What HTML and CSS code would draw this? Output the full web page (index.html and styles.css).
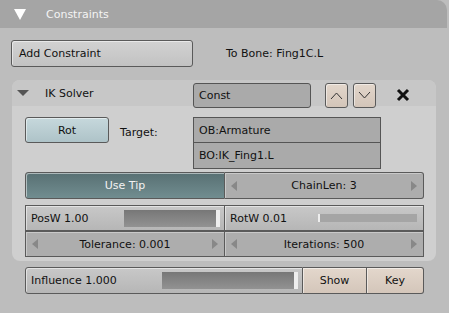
FILE: index.html
```html
<!DOCTYPE html>
<html lang="en">
<head>
  <meta charset="UTF-8" />
  <title>Constraints</title>
  <link rel="stylesheet" href="styles.css">
</head>
<body>
  <div class="header">
    <span class="tri-white"></span>
    <span class="header-title">Constraints</span>
  </div>

  <div class="content">
    <div class="top-row">
      <div class="btn add-btn">Add Constraint</div>
      <div class="bone-label">To Bone: Fing1C.L</div>
    </div>

    <!-- IK solver panel -->
    <div class="panel">
      <div class="panel-head">
        <span class="tri-dark"></span>
        <span class="panel-title">IK Solver</span>
        <div class="field const-field">Const</div>
        <div class="btn small-btn">
          <svg width="13" height="9" viewBox="0 0 13 9"><path d="M1 8 L6.5 2 L12 8" fill="none" stroke="#333" stroke-width="1"/></svg>
        </div>
        <div class="btn small-btn">
          <svg width="13" height="9" viewBox="0 0 13 9"><path d="M1 1 L6.5 7 L12 1" fill="none" stroke="#333" stroke-width="1"/></svg>
        </div>
        <svg class="close-x" width="14" height="14" viewBox="0 0 14 14"><path d="M2 2 L12 12 M12 2 L2 12" stroke="#111" stroke-width="3"/></svg>
      </div>

      <div class="panel-body">
        <div class="target-row">
          <div class="btn rot-btn">Rot</div>
          <div class="target-label">Target:</div>
          <div class="target-fields">
            <div class="field tfield">OB:Armature</div>
            <div class="field tfield">BO:IK_Fing1.L</div>
          </div>
        </div>

        <div class="grid-row first">
          <div class="btn tip-btn">Use Tip</div>
          <div class="num"><span class="arr-l"></span>ChainLen: 3<span class="arr-r"></span></div>
        </div>
        <div class="grid-row">
          <div class="slider"><span>PosW 1.00</span><div class="track"><div class="fill" style="width:100%"></div></div></div>
          <div class="slider"><span>RotW 0.01</span><div class="track"><div class="fill" style="width:0%"></div></div></div>
        </div>
        <div class="grid-row">
          <div class="num"><span class="arr-l"></span>Tolerance: 0.001<span class="arr-r"></span></div>
          <div class="num"><span class="arr-l"></span>Iterations: 500<span class="arr-r"></span></div>
        </div>
      </div>
    </div>

    <div class="bottom-row">
      <div class="slider influence"><span>Influence 1.000</span><div class="track"><div class="fill" style="width:100%"></div></div></div>
      <div class="btn beige show-btn">Show</div>
      <div class="btn beige key-btn">Key</div>
    </div>
  </div>
</body>
</html>
```

FILE: styles.css
```css
body {
  margin: 0;
  width: 449px;
  height: 313px;
  overflow: hidden;
  background: #bdbdbd;
  font-family: 'DejaVu Sans', sans-serif;
  font-size: 11px;
  color: #111;
  white-space: nowrap;
}

.header {
  height: 28px;
  background: #a5a5a5;
  border-top-right-radius: 10px;
  display: flex;
  align-items: center;
  margin-right: 2px;
}

.tri-white {
  width: 0;
  height: 0;
  margin-left: 14px;
  border-left: 6px solid transparent;
  border-right: 6px solid transparent;
  border-top: 11px solid #fff;
}

.header-title {
  margin-left: 20px;
  color: #f4f4f4;
}

.content {
  padding: 12px 0 0 11px;
}

.btn {
  box-sizing: border-box;
  display: flex;
  align-items: center;
  justify-content: center;
  border: 1px solid #5a5a5a;
  border-radius: 3px;
  box-shadow: inset 1px 1px 0 rgba(255,255,255,0.5);
}

.top-row {
  display: flex;
  align-items: center;
  height: 27px;
}

.add-btn {
  width: 182px;
  height: 27px;
  justify-content: flex-start;
  padding-left: 7px;
  background: linear-gradient(#d2d2d2, #c2c2c2);
}

.bone-label {
  margin-left: 33px;
}

.panel {
  margin: 13px 0 0 1px;
  width: 424px;
  height: 181px;
  background: #cfcfcf;
  border-radius: 8px;
  overflow: hidden;
}

.panel-head {
  height: 26px;
  background: #c7c7c7;
  display: flex;
  align-items: center;
}

.tri-dark {
  width: 0;
  height: 0;
  margin-left: 5px;
  border-left: 6px solid transparent;
  border-right: 6px solid transparent;
  border-top: 6px solid #555;
}

.panel-title {
  margin-left: 16px;
  width: 148px;
}

.field {
  box-sizing: border-box;
  display: flex;
  align-items: center;
  padding-left: 5px;
  border: 1px solid #555;
  background: #aaaaaa;
}

.const-field {
  width: 118px;
  height: 25px;
  margin-top: 4px;
  border-radius: 3px;
}

.small-btn {
  width: 23px;
  height: 25px;
  margin-top: 4px;
  margin-left: 14px;
  background: linear-gradient(#e2d6cb, #d3c5b9);
}

.small-btn + .small-btn {
  margin-left: 5px;
}

.close-x {
  margin: 4px 0 0 20px;
}

.panel-body {
  padding: 11px 0 0 13px;
}

.target-row {
  display: flex;
  height: 52px;
}

.rot-btn {
  width: 84px;
  height: 26px;
  background: linear-gradient(#c6d8dc, #aec3c8);
}

.target-label {
  width: 73px;
  margin-left: 11px;
  margin-top: 9px;
}

.target-fields {
  width: 188px;
  display: flex;
  flex-direction: column;
}

.tfield {
  height: 26px;
}

.tfield + .tfield {
  border-top: none;
}

.grid-row {
  display: flex;
  width: 399px;
  height: 26px;
}

.grid-row.first {
  margin-top: 3px;
  margin-bottom: 6px;
  height: 27px;
}

.grid-row > div {
  flex: 1 1 0;
  min-width: 0;
}

.tip-btn {
  color: #f2f2f2;
  background: linear-gradient(#587073, #718d90);
  border-radius: 3px 0 0 3px;
}

.num {
  box-sizing: border-box;
  position: relative;
  display: flex;
  align-items: center;
  justify-content: center;
  background: #adadad;
  border: 1px solid #5a5a5a;
  box-shadow: inset 1px 1px 0 rgba(255,255,255,0.35);
}

.grid-row.first .num {
  border-radius: 0 3px 3px 0;
  border-left: none;
}

.grid-row .num + .num {
  border-left: none;
}

.arr-l, .arr-r {
  position: absolute;
  top: 50%;
  margin-top: -5px;
  width: 0;
  height: 0;
  border-top: 5px solid transparent;
  border-bottom: 5px solid transparent;
}

.arr-l {
  left: 6px;
  border-right: 6px solid #888;
}

.arr-r {
  right: 6px;
  border-left: 6px solid #888;
}

.slider {
  box-sizing: border-box;
  display: flex;
  align-items: center;
  padding-left: 5px;
  background: linear-gradient(#c8c8c8, #b6b6b6);
  border: 1px solid #5a5a5a;
  box-shadow: inset 1px 1px 0 rgba(255,255,255,0.5);
}

.slider span {
  flex: 1;
}

.track {
  flex-shrink: 0;
  width: 94px;
  height: 17px;
  margin-right: 4px;
  background: linear-gradient(#b2b2b2, #a8a8a8);
  border-right: 2px solid #eee;
}

.fill {
  height: 100%;
  background: linear-gradient(#777, #929292);
  border-right: 2px solid #eee;
  box-sizing: border-box;
}

.grid-row .slider + .slider {
  border-left: none;
}

.grid-row .slider + .slider .track {
  width: 97px;
  height: 8px;
  margin-right: 6px;
  background: #a5a5a5;
  border: none;
  border-left: 2px solid #eee;
}

.grid-row .slider + .slider .fill {
  border: none;
}

.bottom-row {
  display: flex;
  margin: 6px 0 0 14px;
  height: 27px;
}

.influence {
  width: 278px;
  border-radius: 3px 0 0 3px;
}

.influence .track {
  width: 134px;
  height: 17px;
}

.beige {
  background: linear-gradient(#e3d7cc, #d4c6ba);
  border-left: none;
  border-radius: 0;
}

.show-btn {
  width: 64px;
}

.key-btn {
  width: 57px;
  border-radius: 0 3px 3px 0;
}
```
